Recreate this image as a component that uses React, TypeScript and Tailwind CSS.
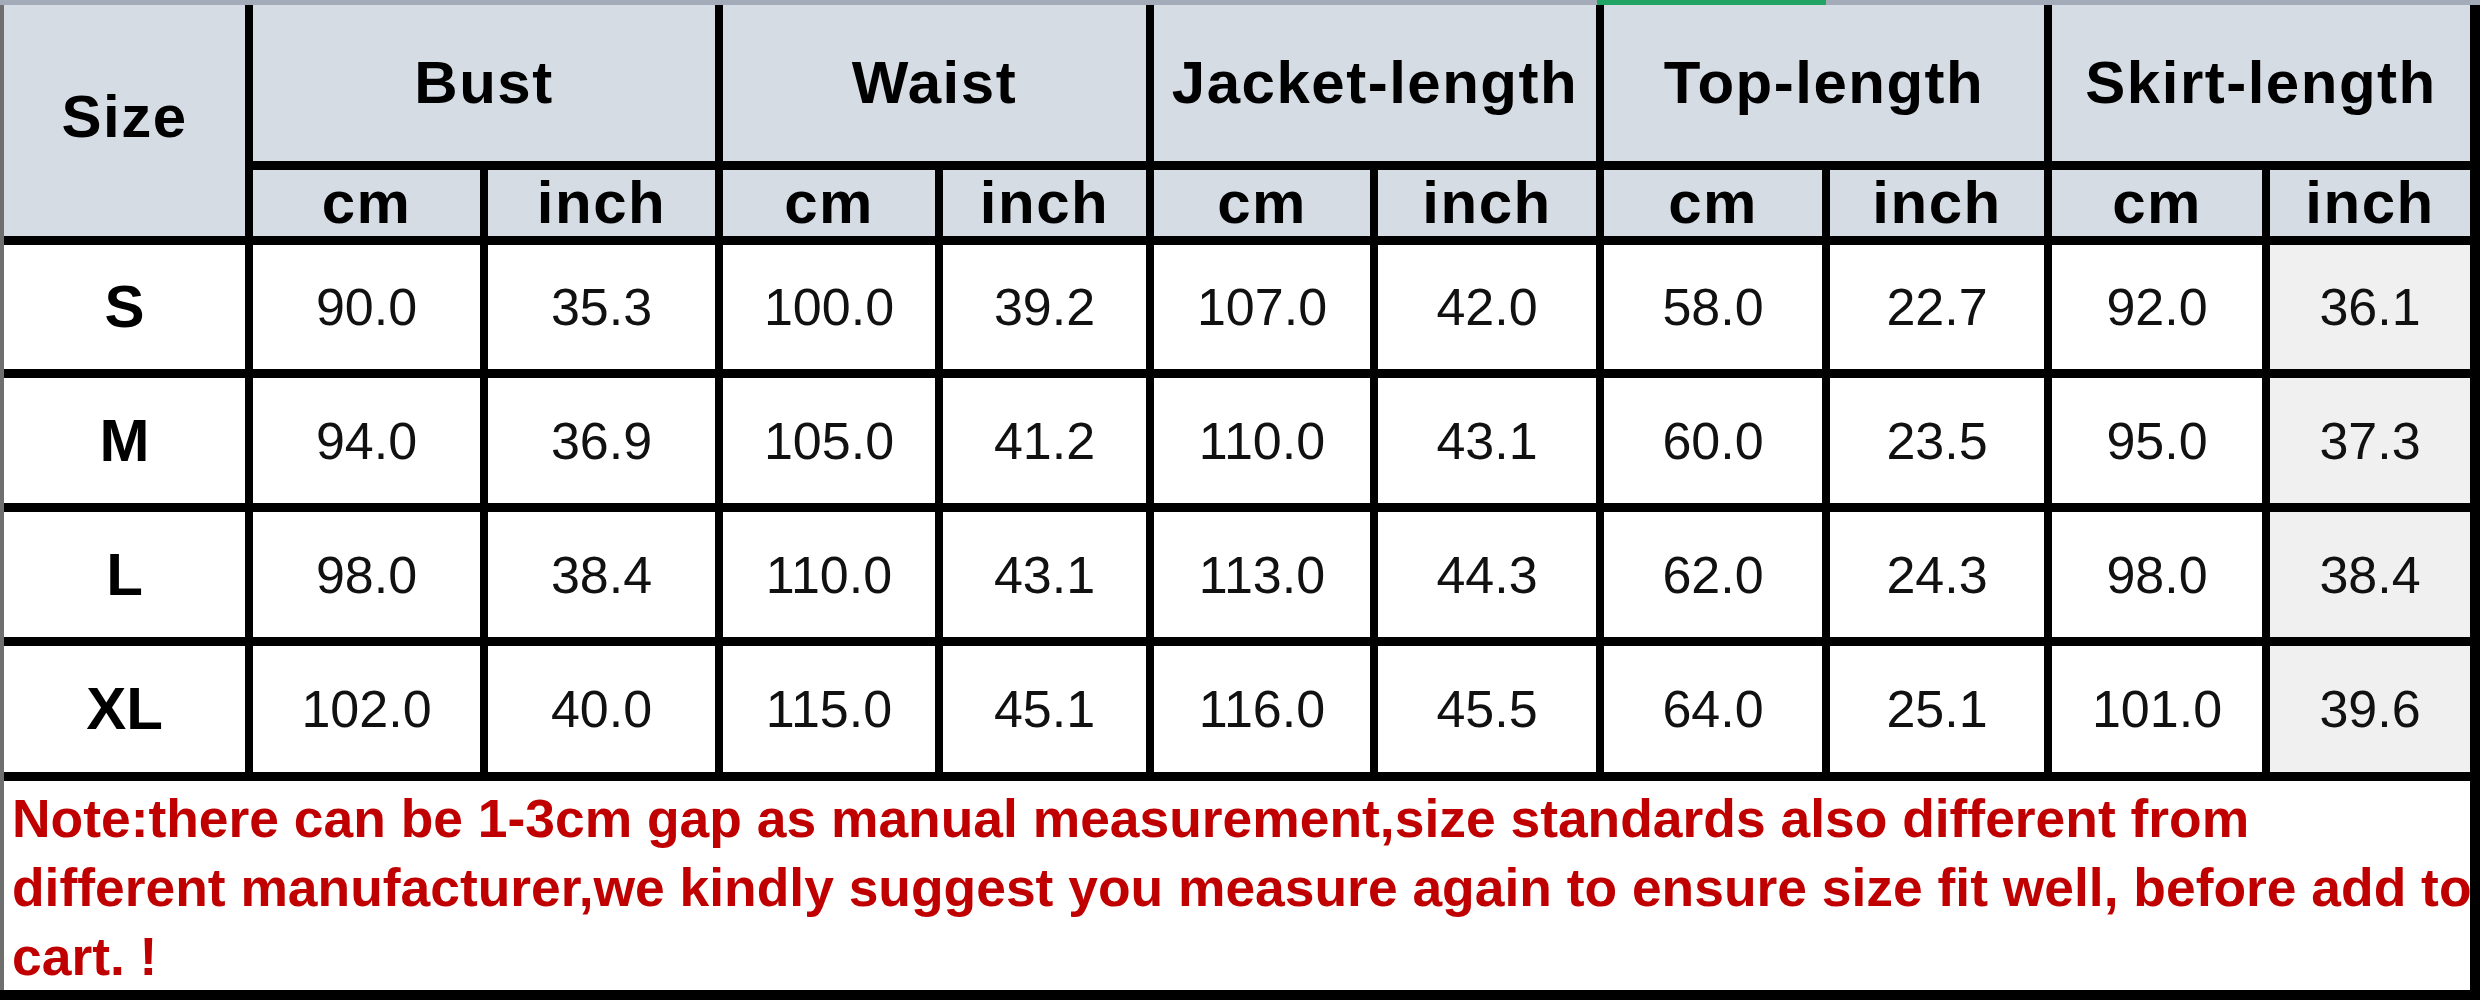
const GROUPS = ['Bust', 'Waist', 'Jacket-length', 'Top-length', 'Skirt-length'];

const ROWS: { size: string; values: string[] }[] = [
  { size: 'S', values: ['90.0', '35.3', '100.0', '39.2', '107.0', '42.0', '58.0', '22.7', '92.0', '36.1'] },
  { size: 'M', values: ['94.0', '36.9', '105.0', '41.2', '110.0', '43.1', '60.0', '23.5', '95.0', '37.3'] },
  { size: 'L', values: ['98.0', '38.4', '110.0', '43.1', '113.0', '44.3', '62.0', '24.3', '98.0', '38.4'] },
  { size: 'XL', values: ['102.0', '40.0', '115.0', '45.1', '116.0', '45.5', '64.0', '25.1', '101.0', '39.6'] },
];

const head =
  'flex items-center justify-center bg-[#d6dce4] text-[60px] font-bold leading-none tracking-[1.5px] text-black';

export default function App() {
  return (
    <div className="flex h-[1000px] w-[2480px] flex-col bg-black font-['Liberation_Sans',Arial,sans-serif]">
      {/* sheet edge with the selected-column marker */}
      <div className="flex h-[5px] shrink-0">
        <div className="w-[1597px] bg-[#a3abb9]" />
        <div className="w-[229px] bg-[#21a464]" />
        <div className="flex-1 bg-[#a3abb9]" />
      </div>

      <div className="flex flex-1">
        <div className="w-[4px] bg-[#6f6f6f]" />
        <div className="grid grid-cols-[241px_227px_227px_212px_203px_216px_218px_218px_214px_210px_200px] grid-rows-[156px_66px_124px_125px_125px_126px_209px] gap-x-[8px] gap-y-[9px] bg-black">
          <div className={`${head} row-span-2 pb-[8px]`}>Size</div>
          {GROUPS.map((g) => (
            <div key={g} className={`${head} col-span-2`}>
              {g}
            </div>
          ))}
          {GROUPS.map((g) => [
            <div key={g + '-cm'} className={head}>cm</div>,
            <div key={g + '-inch'} className={head}>inch</div>,
          ])}

          {ROWS.map((row) => [
            <div key={row.size} className="flex items-center justify-center bg-white text-[60px] font-bold leading-none text-black">
              {row.size}
            </div>,
            ...row.values.map((v, i) => (
              <div
                key={row.size + i}
                className={`flex items-center justify-center text-[52px] leading-none text-[#111] ${
                  i === 9 ? 'bg-[#f0f0f0]' : 'bg-white'
                }`}
              >
                {v}
              </div>
            )),
          ])}

          <div className="col-span-11 bg-white pl-[8px] pt-[3px] text-[53.4px] font-bold leading-[69px] whitespace-nowrap text-[#c00000]">
            Note:there can be 1-3cm gap as manual measurement,size standards also different from
            <br />
            different manufacturer,we kindly suggest you measure again to ensure size fit well, before add to
            <br />
            cart. !
          </div>
        </div>
      </div>
      <div className="h-[10px] shrink-0" />
    </div>
  );
}
